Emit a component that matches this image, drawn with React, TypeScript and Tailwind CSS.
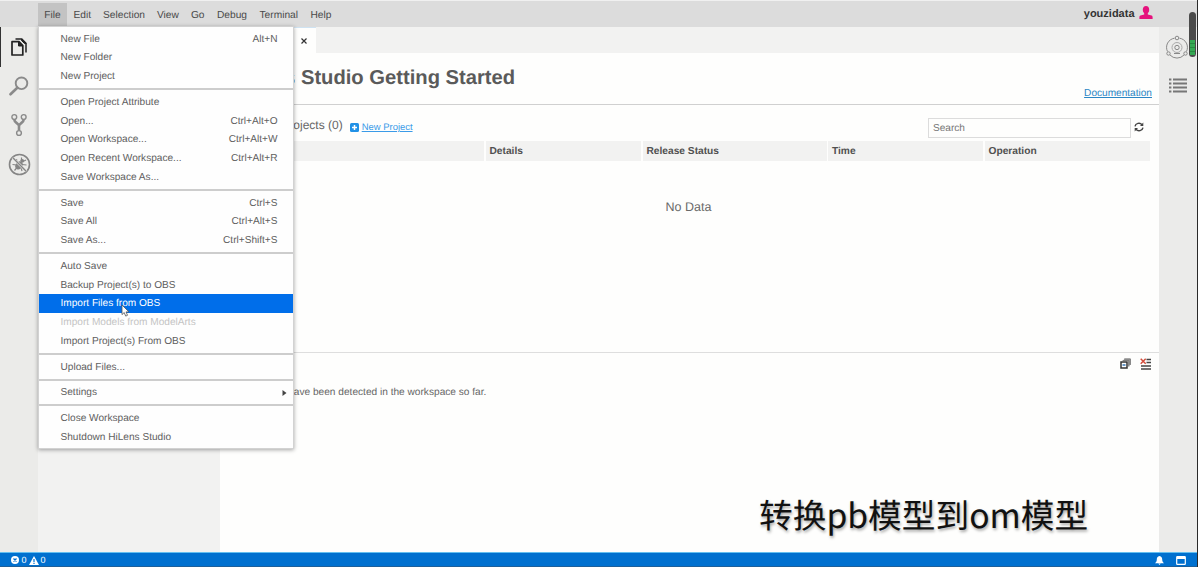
import React from "react";

type Item = { label: string; keys?: string; active?: boolean; disabled?: boolean; submenu?: boolean };

const groups: Item[][] = [
  [{ label: "New File", keys: "Alt+N" }, { label: "New Folder" }, { label: "New Project" }],
  [
    { label: "Open Project Attribute" },
    { label: "Open...", keys: "Ctrl+Alt+O" },
    { label: "Open Workspace...", keys: "Ctrl+Alt+W" },
    { label: "Open Recent Workspace...", keys: "Ctrl+Alt+R" },
    { label: "Save Workspace As..." },
  ],
  [
    { label: "Save", keys: "Ctrl+S" },
    { label: "Save All", keys: "Ctrl+Alt+S" },
    { label: "Save As...", keys: "Ctrl+Shift+S" },
  ],
  [
    { label: "Auto Save" },
    { label: "Backup Project(s) to OBS" },
    { label: "Import Files from OBS", active: true },
    { label: "Import Models from ModelArts", disabled: true },
    { label: "Import Project(s) From OBS" },
  ],
  [{ label: "Upload Files..." }],
  [{ label: "Settings", submenu: true }],
  [{ label: "Close Workspace" }, { label: "Shutdown HiLens Studio" }],
];

function Cursor() {
  return (
    <svg className="absolute left-[82px] top-[10px] z-10" width="9" height="13" viewBox="0 0 9 13">
      <path d="M1 1v9.6l2.2-2 1.5 3.5 1.8-.8L5 7.9h3z" fill="#fff" stroke="#555" strokeWidth=".8" />
    </svg>
  );
}

function MenuRow({ item }: { item: Item }) {
  const tone = item.active
    ? "bg-[#006eea] text-white"
    : item.disabled
      ? "text-[#c4c4c4]"
      : "text-[#606060]";
  return (
    <div className={`relative flex h-[18.8px] shrink-0 items-center justify-between pl-[21.5px] pr-[15.5px] pt-[1.5px] ${tone}`}>
      <span>{item.label}</span>
      {item.keys && <span>{item.keys}</span>}
      {item.submenu && (
        <svg className="-mr-[9px]" width="5" height="6" viewBox="0 0 5 6">
          <path d="M.5 0 4.5 3 .5 6z" fill="#444" />
        </svg>
      )}
      {item.active && <Cursor />}
    </div>
  );
}

function FileMenu() {
  return (
    <div className="absolute left-[38px] top-[26px] z-20 flex h-[423px] w-[256px] flex-col border border-[#d2d2d2] bg-[#fefefe] pt-[2.5px] shadow-[0_1px_4px_rgba(0,0,0,0.35)]">
      {groups.map((group, i) => (
        <React.Fragment key={i}>
          {i > 0 && <div className="my-[2.5px] h-[1.8px] shrink-0 bg-[#cdcdcd]" />}
          {group.map((item) => (
            <MenuRow key={item.label} item={item} />
          ))}
        </React.Fragment>
      ))}
    </div>
  );
}

function TopBar() {
  return (
    <header className="flex h-[27px] shrink-0 border-t border-[#f0f0f0] bg-[#dcdcdc] pl-[38px] pr-[44px] text-[#4a4a4a]">
      <nav className="flex items-stretch pt-[2px] text-[10.2px]">
        <div className="flex w-[29px] items-center justify-center bg-[#c3c3c3] pt-[2px]">File</div>
        <div className="flex items-center pl-[6.5px] pt-[2px]">Edit</div>
        <div className="flex items-center pl-[12px] pt-[2px]">Selection</div>
        <div className="flex items-center pl-[12px] pt-[2px]">View</div>
        <div className="flex items-center pl-[12px] pt-[2px]">Go</div>
        <div className="flex items-center pl-[12.5px] pt-[2px]">Debug</div>
        <div className="flex items-center pl-[12.5px] pt-[2px]">Terminal</div>
        <div className="flex items-center pl-[12.5px] pt-[2px]">Help</div>
      </nav>
      <div className="ml-auto flex items-center gap-[4px] text-[11px] font-bold text-[#333]">
        <span>youzidata</span>
        <svg className="-mt-[3px]" width="14" height="13" viewBox="0 0 14 13" fill="#e5127d">
          <ellipse cx="7" cy="3.8" rx="3.2" ry="3.8" />
          <path d="M5.2 6h3.6v2.4l3.8 1.1c.8.3 1 .9 1 1.7V13H.4v-1.800c0-.8.2-1.400 1-1.700l3.800-1.100z" />
        </svg>
      </div>
    </header>
  );
}

function ActivityBar() {
  return (
    <aside className="flex w-[38px] shrink-0 flex-col items-center bg-[#ebebe9]">
      <div className="flex h-[40px] w-full items-center justify-center border-l border-[#333] pr-px">
        <svg width="18" height="20" viewBox="0 0 18 20" fill="none" stroke="#222">
          <path d="M2 4.700h7l3.800 3.800V18H2z" strokeWidth="1.700" strokeLinejoin="round" />
          <path d="M8.500 4.700v4.300h4.300z" fill="#222" />
          <path d="M5.500 2h6.300L16 6.200v9.300" strokeWidth="1.500" />
          <path d="M11.500 2v1.500l3 3H16z" fill="#222" />
        </svg>
      </div>
      <div className="flex h-[38px] items-center">
        <svg width="20" height="20" viewBox="0 0 20 20" fill="none" stroke="#8a8a8a">
          <circle cx="12.500" cy="7.300" r="5.800" strokeWidth="1.900" />
          <path d="M8.300 11.700 1.500 18.300" strokeWidth="2.600" strokeLinecap="round" />
        </svg>
      </div>
      <div className="flex h-[39px] items-center">
        <svg width="18" height="24" viewBox="0 0 18 24" fill="none" stroke="#8a8a8a">
          <circle cx="4.300" cy="4" r="2.400" strokeWidth="1.400" />
          <circle cx="13.700" cy="4" r="2.400" strokeWidth="1.400" />
          <circle cx="9" cy="20" r="2.400" strokeWidth="1.400" />
          <path d="M4.300 6.800c0 3 4.700 3.600 4.700 6.200v4.300M13.700 6.800c0 3-4.700 3.600-4.700 6.200" strokeWidth="2.600" />
        </svg>
      </div>
      <div className="flex h-[40px] items-center">
        <svg width="23" height="23" viewBox="0 0 23 23" fill="none" stroke="#858585">
          <circle cx="11.500" cy="11.500" r="10" strokeWidth="1.600" />
          <ellipse cx="11" cy="12.400" rx="3.300" ry="4.300" fill="#858585" stroke="none" transform="rotate(35 11 12.400)" />
          <circle cx="14.200" cy="7.800" r="1.900" fill="#858585" stroke="none" />
          <path d="M9 9.500 8.500 6M8.500 12l-4-.5M9 14.500l-2.500 3M13 14.500l1 3.500M14 11.500l4.500.5M13.500 8V4.500M15 8.500l3-1.500" strokeWidth="1.200" />
          <path d="M4.600 4.600 18.400 18.400" stroke="#ebebe9" strokeWidth="2.600" />
          <path d="M4.600 4.600 18.400 18.400" strokeWidth="1.400" />
        </svg>
      </div>
    </aside>
  );
}

function ProjectTable() {
  return (
    <div className="mr-[9px] flex h-[20px] shrink-0 gap-[1.500px] text-[10.200px] font-bold text-[#505050]">
      <div className="w-[264px] bg-[#f2f2f1]" />
      <div className="flex w-[155.500px] items-center bg-[#f2f2f1] pl-[4px] pt-px">Details</div>
      <div className="flex w-[184px] items-center bg-[#f2f2f1] pl-[4px] pt-px">Release Status</div>
      <div className="flex w-[155px] items-center bg-[#f2f2f1] pl-[4px] pt-px">Time</div>
      <div className="flex flex-1 items-center bg-[#f2f2f1] pl-[4px] pt-px">Operation</div>
    </div>
  );
}

function Editor() {
  return (
    <main className="flex w-[939px] shrink-0 flex-col bg-[#fefefd]">
      <div className="flex h-[26px] shrink-0 bg-[#f2f2f1]">
        <div className="flex w-[96px] items-center justify-end border-t border-[#cfe3f2] bg-[#fefefd] pr-[9px]">
          <svg width="6" height="6" viewBox="0 0 6 6" stroke="#333" strokeWidth="1.200">
            <path d="M.5.5l5 5M5.500.5l-5 5" />
          </svg>
        </div>
      </div>
      <div className="flex h-[52px] shrink-0 justify-between border-b-[1.500px] border-[#d0d0d0] pl-[8px] pr-[7px]">
        <h1 className="pt-[13px] text-[20.200px] font-bold leading-[24px] text-[#5a5a5a]">HiLens Studio Getting Started</h1>
        <a className="self-end pb-[4px] text-[#2b86c5] underline">Documentation</a>
      </div>
      <div className="flex h-[36px] shrink-0 items-start pl-[42px] pr-[15px]">
        <span className="pt-[12px] text-[12px] leading-[16px] text-[#666]">My Projects (0)</span>
        <svg className="ml-[7px] mt-[17.500px]" width="9" height="9" viewBox="0 0 9 9">
          <rect width="9" height="9" rx="1.500" fill="#2191e6" />
          <path d="M4.500 2v5M2 4.500h5" stroke="#fff" strokeWidth="1.500" />
        </svg>
        <a className="ml-[3px] pt-[17px] text-[9.450px] leading-[12px] text-[#3b9be8] underline">New Project</a>
        <div className="ml-auto mt-[13px] flex h-[20px] w-[203px] items-center border border-[#dcdcdc] pl-[4px] pt-px text-[#777]">Search</div>
        <svg className="ml-[3px] mt-[17px]" width="10" height="10" viewBox="0 0 10 10" fill="none" stroke="#444" strokeWidth="1.400">
          <path d="M1 4.300A3.900 3.600 0 0 1 8 2.700M9 5.700A3.900 3.600 0 0 1 2 7.300" />
          <path d="M9.300.6v3.400H6zM.7 9.400V6H4z" fill="#444" stroke="none" />
        </svg>
      </div>
      <ProjectTable />
      <div className="flex h-[190.500px] shrink-0 justify-center pr-[2px] pt-[40px] text-[12.500px] text-[#6a6a6a]">
        <span>No Data</span>
      </div>
      <section className="flex flex-1 flex-col border-t-[1.500px] border-[#dedede]">
        <div className="flex h-[22px] items-center justify-end gap-[9px] pr-[8px]">
          <svg width="11" height="11" viewBox="0 0 11 11" fill="none">
            <path d="M3 2.500 5 .5h5.500V6L8 9V3H3z" fill="#999" />
            <path d="M4 1h6.500v6M2.500 2.500H9v6" stroke="#777" strokeWidth=".8" />
            <rect x="1" y="4" width="6" height="6" fill="#fff" stroke="#333" strokeWidth="1.500" />
            <path d="M2.500 7h3" stroke="#3577b8" strokeWidth="1.500" />
          </svg>
          <svg width="11" height="12" viewBox="0 0 11 12" fill="none">
            <path d="M6.500 1.500H11M6.500 4.500H11M1 8h10M1 11h10" stroke="#444" strokeWidth="1.600" />
            <path d="M.7.7l5 5M5.700.7l-5 5" stroke="#d14b3a" strokeWidth="1.500" />
          </svg>
        </div>
        <p className="pl-[8px] pt-[12px] text-[10.150px] text-[#666]">No problems have been detected in the workspace so far.</p>
      </section>
    </main>
  );
}

function RightBar() {
  return (
    <aside className="flex flex-1 flex-col items-center bg-[#ebebea] pt-[8px]">
      <svg className="mr-px" width="22" height="24" viewBox="0 0 22 24" fill="none" stroke="#888" strokeWidth="1">
        <path d="M8.500 3.200a9.300 9.300 0 0 0-7 13.300M13.500 3.200a9.300 9.300 0 0 1 7 13.300M4 20a9.500 9.500 0 0 0 14 0" />
        <circle cx="11" cy="3" r="1.800" />
        <circle cx="2.500" cy="18.500" r="1.700" />
        <circle cx="19.500" cy="18.500" r="1.700" />
        <circle cx="11" cy="12.500" r="5" stroke="#aaa" />
        <circle cx="11" cy="12.500" r="2.200" />
        <path d="M8 18.500h6" />
      </svg>
      <svg className="mt-[19px]" width="18" height="15" viewBox="0 0 18 15" stroke="#777" strokeWidth="2">
        <path d="M0 1.500h2.400M0 5.500h2.400M0 9.500h2.400M0 13.500h2.400M4 1.500h14M4 5.500h14M4 9.500h14M4 13.500h14" />
      </svg>
    </aside>
  );
}

function StatusBar() {
  return (
    <footer className="flex h-[15px] shrink-0 items-center border-b border-t border-b-[#1d5f9a] border-t-[#63bff0] bg-[#0070cf] pl-[11px] pr-[11px] pt-px text-[9px] text-white">
      <svg width="8" height="8" viewBox="0 0 8 8">
        <circle cx="4" cy="4" r="4" fill="#fff" />
        <path d="M2.500 2.500l3 3M5.500 2.500l-3 3" stroke="#0070cf" strokeWidth="1.300" />
      </svg>
      <span className="ml-[2.500px]">0</span>
      <svg className="ml-[2.500px]" width="10" height="9" viewBox="0 0 10 9">
        <path d="M5 0l5 9H0z" fill="#fff" />
        <path d="M5 3v3M5 6.800v1.200" stroke="#0070cf" strokeWidth="1.200" />
      </svg>
      <span className="ml-[1.500px]">0</span>
      <svg className="ml-auto" width="9" height="9" viewBox="0 0 9 9" fill="#fff">
        <path d="M4.500 0c2 .3 2.700 1.800 2.700 3.500C7.200 5.500 8 6 9 7.200H0C1 6 1.800 5.500 1.800 3.500 1.800 1.800 2.500.3 4.500 0z" />
        <path d="M3.300 7.500h2.400L4.500 9z" />
      </svg>
      <svg className="ml-[12px]" width="10" height="9" viewBox="0 0 10 9" fill="none" stroke="#fff">
        <rect x=".7" y=".7" width="8.600" height="7.600" rx=".6" strokeWidth="1.200" />
        <path d="M1 2h8" strokeWidth="2" />
      </svg>
    </footer>
  );
}

export default function App() {
  return (
    <div className="relative flex h-[567px] w-[1198px] overflow-hidden bg-[#2a2a2a] pr-[1.500px] font-['Liberation_Sans',Arial,sans-serif] text-[10.100px] leading-[12px] [text-rendering:geometricPrecision]">
      <div className="flex flex-1 flex-col">
        <TopBar />
        <div className="flex min-h-0 flex-1">
          <ActivityBar />
          <div className="w-[182px] shrink-0 bg-[#f2f2f1]" />
          <Editor />
          <RightBar />
        </div>
        <StatusBar />
      </div>
      <FileMenu />
      <div className="absolute left-[1189px] top-[12px] flex h-[45px] w-[7px] flex-col justify-end overflow-hidden rounded-full bg-[#4b4b4b] px-px pb-[2px]">
        <div className="flex h-[15px] flex-col justify-evenly bg-[#35a853]">
          <div className="h-px bg-[#278a41]" />
          <div className="h-px bg-[#278a41]" />
          <div className="h-px bg-[#278a41]" />
        </div>
      </div>
      <div className="absolute left-[759px] top-[493px] z-30 whitespace-nowrap font-['Noto_Sans_CJK_SC',sans-serif] text-[33.700px] leading-[42px] text-[#111] [text-shadow:1px_2px_3px_rgba(0,0,0,0.35)]">
        转换pb模型到om模型
      </div>
    </div>
  );
}
